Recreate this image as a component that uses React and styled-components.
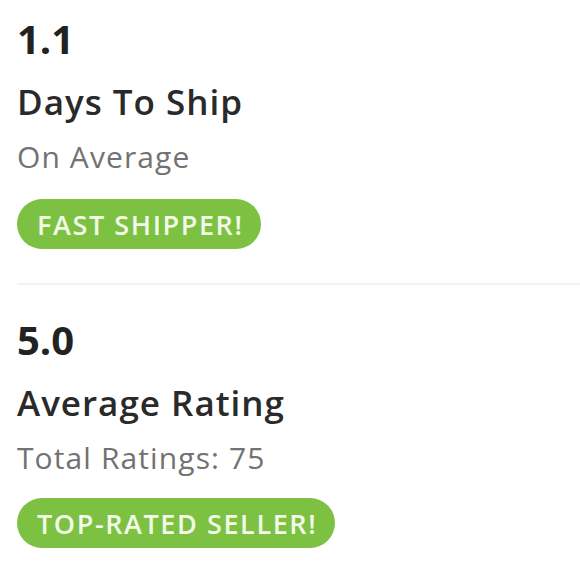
import React from 'react'
import styled, { createGlobalStyle } from 'styled-components'

const GlobalStyle = createGlobalStyle`
  html, body {
    margin: 0;
    padding: 0;
    background: #fff;
  }
  body {
    font-family: "Open Sans", Lato, sans-serif;
    -webkit-font-smoothing: antialiased;
  }
`

const Page = styled.div`
  display: flex;
  flex-direction: column;
  padding: 19px 0 0 17px;
`

const Stat = styled.section`
  display: flex;
  flex-direction: column;
  align-items: flex-start;
`

const Value = styled.div`
  font-size: 40px;
  line-height: 40px;
  font-weight: 700;
  color: #222;
`

const Title = styled.div`
  margin-top: 25px;
  font-size: 35px;
  line-height: 35px;
  font-weight: 600;
  letter-spacing: 1px;
  color: #2a2a2a;
`

const Note = styled.div`
  margin-top: 23px;
  font-size: 30px;
  line-height: 29px;
  letter-spacing: 1.1px;
  color: #727272;
`

const Badge = styled.span`
  margin-top: ${p => p.$gap}px;
  display: inline-flex;
  align-items: center;
  height: 50px;
  padding: 0 18px 0 20px;
  border-radius: 25px;
  background: #7cc142;
  color: #f3fae8;
  font-size: 27px;
  font-weight: 600;
  letter-spacing: 1.6px;
`

const Divider = styled.hr`
  margin: 34px 0 35px;
  border: 0;
  height: 2px;
  background: #f2f2f2;
`

const stats = [
  { value: '1.1', title: 'Days To Ship', note: 'On Average', badge: 'FAST SHIPPER!', gap: 28 },
  { value: '5.0', title: 'Average Rating', note: 'Total Ratings: 75', badge: 'TOP-RATED SELLER!', gap: 26 }
]

const App = () => (
  <Page>
    <GlobalStyle />
    {stats.map((s, i) => (
      <React.Fragment key={s.value}>
        {i > 0 && <Divider />}
        <Stat>
          <Value>{s.value}</Value>
          <Title>{s.title}</Title>
          <Note>{s.note}</Note>
          <Badge $gap={s.gap}>{s.badge}</Badge>
        </Stat>
      </React.Fragment>
    ))}
  </Page>
)

export default App
